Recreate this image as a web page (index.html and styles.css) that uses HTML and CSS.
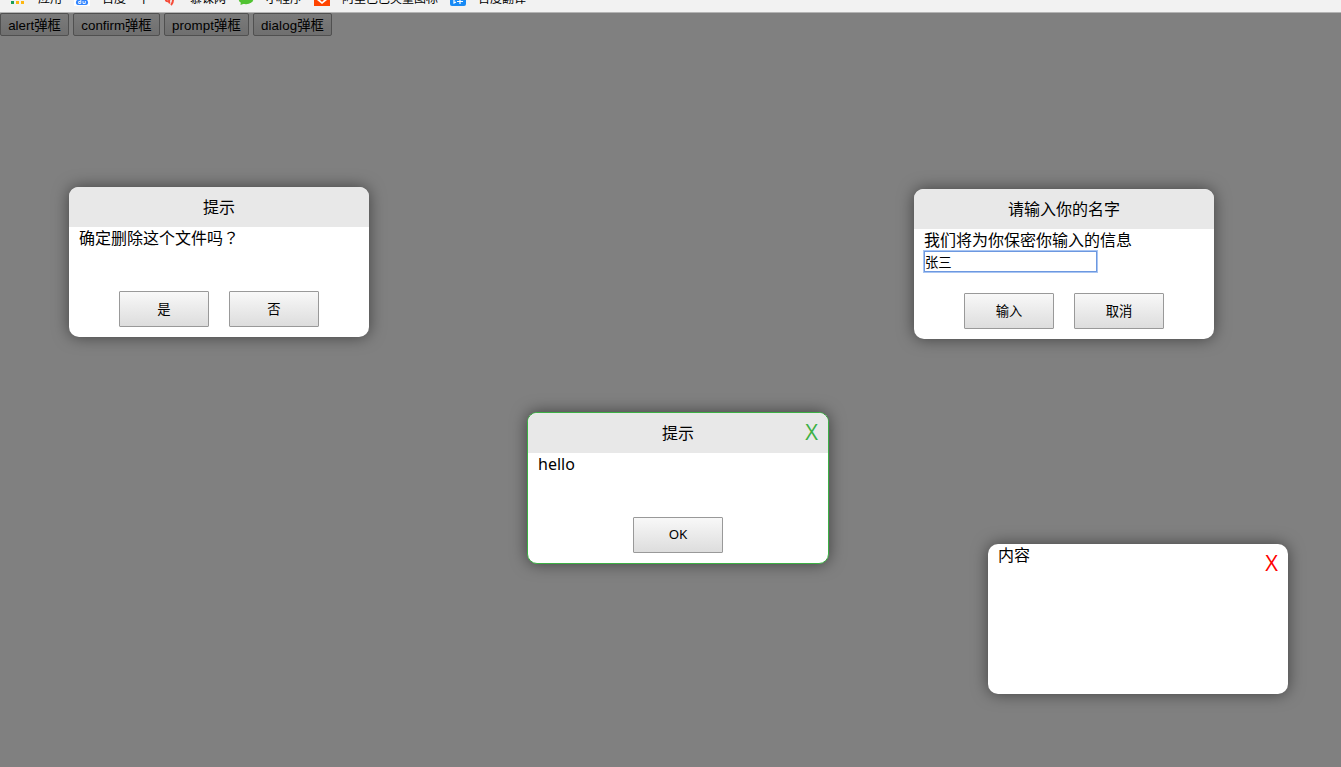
FILE: index.html
```html
<!DOCTYPE html>
<html lang="zh-CN">
<head>
<meta charset="utf-8">
<title>弹框</title>
<link rel="stylesheet" href="styles.css">
</head>
<body>
<nav class="bookmarks">
  <span class="bookmark"><svg class="icon" viewBox="0 0 16 16"><path fill="#189d58" d="M1 11h3v3H1z"/><path fill="#fdb813" d="M6 11h3v3H6zM11 11h3v3h-3z"/></svg><span class="label">应用</span></span>
  <span class="bookmark"><svg class="icon" viewBox="0 0 16 16"><path fill="#fff" d="M0 0h16v16H0z"/><path fill="#3285ff" d="M8 5c2 0 3 3 5 5s1 5-1 5H4c-2 0-3-3-1-5s3-5 5-5z"/><path d="M6.800 9v4.500H4.700v-2h2M9 11v2.500h2.300V11" fill="none" stroke="#fff" stroke-width=".9"/></svg><span class="label">百度一下</span></span>
  <span class="bookmark"><svg class="icon" viewBox="0 0 16 16"><path d="M4 8q-1 4 3 3M8 9q-2 3 0 4M7 10q5-4 4 0 0 3-2 5" fill="none" stroke="#f54b39" stroke-width="2"/></svg><span class="label">慕课网</span></span>
  <span class="bookmark"><svg class="icon" viewBox="0 0 16 16"><ellipse cx="8" cy="8.500" rx="7.500" ry="5.800" fill="#51c332"/><path fill="#51c332" d="m3 11-.5 4 4-1.500z"/></svg><span class="label">小程序</span></span>
  <span class="bookmark"><svg class="icon" viewBox="0 0 16 16"><path fill="#ff4400" d="M0 0h16v16H0z"/><path fill="#fff" d="M3 6h10v4l-5 4-5-4z"/><path fill="#ff4400" d="m8 8 2 2-2 2-2-2z"/></svg><span class="label">阿里巴巴矢量图标</span></span>
  <span class="bookmark"><svg class="icon" viewBox="0 0 16 16"><rect width="16" height="16" rx="2" fill="#188af5"/><path d="M4 7v6l2-1M7 9.500h6M7 11.500h6M10 7v7" fill="none" stroke="#fff" stroke-width="1.200"/></svg><span class="label">百度翻译</span></span>
</nav>
<main class="page">
  <div class="triggers">
    <button class="trigger trigger-alert">alert弹框</button>
    <button class="trigger trigger-confirm">confirm弹框</button>
    <button class="trigger trigger-prompt">prompt弹框</button>
    <button class="trigger trigger-dialog">dialog弹框</button>
  </div>
</main>
<section class="dialog dialog-confirm">
  <header class="dialog-title">提示</header>
  <div class="dialog-body">确定删除这个文件吗<span class="mark" lang="zh-TW">？</span></div>
  <footer class="dialog-actions"><button class="action">是</button><button class="action">否</button></footer>
</section>
<section class="dialog dialog-prompt">
  <header class="dialog-title">请输入你的名字</header>
  <div class="dialog-body">我们将为你保密你输入的信息<input class="name-input" type="text" value="张三"></div>
  <footer class="dialog-actions"><button class="action">输入</button><button class="action">取消</button></footer>
</section>
<section class="dialog dialog-alert">
  <header class="dialog-title">提示</header>
  <span class="close">X</span>
  <div class="dialog-body">hello</div>
  <footer class="dialog-actions"><button class="action action-ok">OK</button></footer>
</section>
<section class="dialog dialog-plain">
  <span class="close">X</span>
  <div class="dialog-body">内容</div>
</section>
</body>
</html>
```

FILE: styles.css
```css
* { box-sizing: border-box; }
body {
  margin: 0;
  height: 767px;
  overflow: hidden;
  display: flex;
  flex-direction: column;
  background: #808080;
  color: #000;
  font: 400 16px/21px "Noto Sans", "Noto Sans CJK SC", sans-serif;
}
.bookmarks {
  height: 13px;
  flex: none;
  display: flex;
  align-items: flex-end;
  gap: 12px;
  padding: 0 10px 6px;
  overflow: hidden;
  background: #f2f2f2;
  border-bottom: 1px solid #b4b4b4;
  font: 400 12px/16px "Liberation Sans", "Noto Sans CJK SC", sans-serif;
}
.bookmark {
  flex: none;
  display: flex;
  align-items: center;
  gap: 12px;
  height: 16px;
  white-space: nowrap;
}
.label { padding-top: 1px; }
.icon { width: 16px; height: 16px; display: block; }
.page { flex: 1; }
.triggers { display: flex; gap: 4px; }
.trigger {
  height: 23px;
  padding: 2px 0 0;
  border: 1px solid #505050;
  border-radius: 2px;
  background: linear-gradient(#7b7b7b, #6f6f6f);
  color: #000;
  font: 400 13.333px/19px "Liberation Sans", "Noto Sans CJK SC", sans-serif;
  white-space: nowrap;
}
.trigger-alert { width: 69px; }
.trigger-confirm { width: 87px; }
.trigger-prompt { width: 85px; letter-spacing: .1px; }
.trigger-dialog { width: 79px; letter-spacing: .1px; }
.dialog {
  position: absolute;
  width: 300px;
  height: 150px;
  display: flex;
  flex-direction: column;
  background: #fff;
  border-radius: 10px;
  box-shadow: 0 0 16px #404040;
}
.dialog-confirm { left: 69px; top: 187px; }
.dialog-prompt { left: 914px; top: 189px; }
.dialog-alert {
  left: 527px;
  top: 412px;
  width: 302px;
  height: 152px;
  border: 1px solid #3cb044;
}
.dialog-plain { left: 988px; top: 544px; }
.dialog-title {
  height: 40px;
  flex: none;
  border-radius: 9px 9px 0 0;
  background: #e8e8e8;
  line-height: 41px;
  text-align: center;
}
.dialog-body { flex: 1; padding: 1px 10px 0; }
.mark { font-family: "Noto Sans CJK TC", sans-serif; line-height: 1; }
.dialog-actions {
  display: flex;
  justify-content: center;
  gap: 20px;
  padding-bottom: 10px;
}
.action {
  width: 90px;
  height: 36px;
  padding: 0 0 1px;
  border: 1px solid #999;
  border-radius: 1px;
  background: linear-gradient(#f8f8f8, #dddddd);
  color: #000;
  font: 400 13.333px/20px "Noto Sans", "Noto Sans CJK SC", sans-serif;
}
.action-ok { padding-bottom: 3px; }
.name-input {
  display: block;
  width: 173px;
  height: 21px;
  padding: 0;
  border: 1px solid #6c98e0;
  outline: 1px solid #a9c5f2;
  outline-offset: 0;
  background: #fff;
  color: #000;
  font: 400 13.333px/19px "Noto Sans", "Noto Sans CJK SC", sans-serif;
}
.close {
  position: absolute;
  top: 6px;
  right: 10px;
  font-family: "Open Sans", sans-serif;
  font-size: 22px;
  line-height: 24px;
  color: #3cb044;
}
.dialog-plain .close { color: #f00; }
```
